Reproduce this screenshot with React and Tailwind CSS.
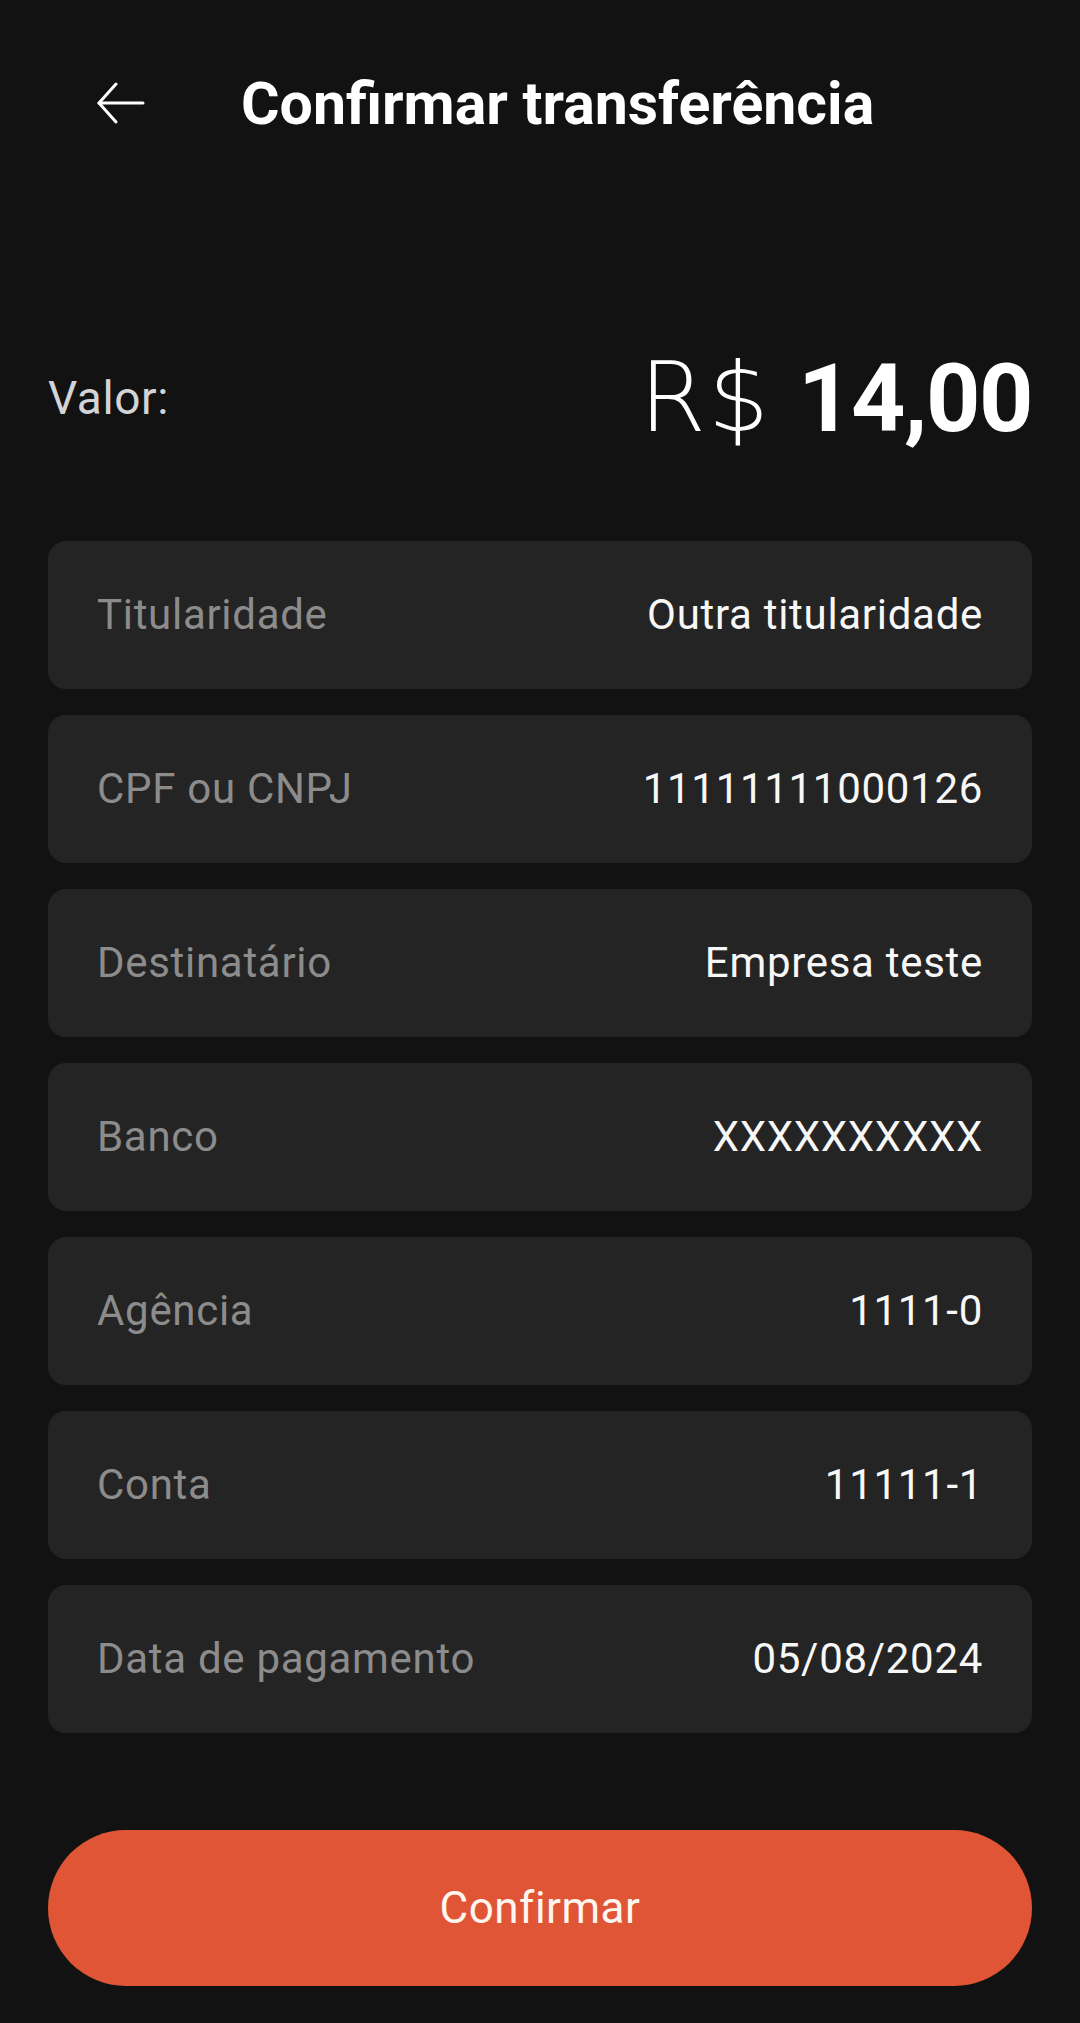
import React from 'react';

const rows = [
  { label: 'Titularidade', value: 'Outra titularidade' },
  { label: 'CPF ou CNPJ', value: '11111111000126' },
  { label: 'Destinatário', value: 'Empresa teste' },
  { label: 'Banco', value: 'XXXXXXXXXX' },
  { label: 'Agência', value: '1111-0' },
  { label: 'Conta', value: '11111-1' },
  { label: 'Data de pagamento', value: '05/08/2024' },
];

const BackArrow = () => (
  <svg width="48" height="42" viewBox="0 0 48 42" fill="none" stroke="currentColor" strokeWidth="3" strokeLinecap="round" strokeLinejoin="round">
    <path d="M46 21H2" />
    <path d="M19 2L2 21L19 40" />
  </svg>
);

const App = () => {
  return (
    <div className="min-h-[2023px] w-full bg-[#121212] text-white font-['Roboto',sans-serif]">
      <div className="h-[206px] flex items-center pl-[97px]">
        <button className="text-white">
          <BackArrow />
        </button>
        <h1 className="ml-[96px] text-[59px] font-bold leading-none">
          Confirmar transferência
        </h1>
      </div>

      <div className="mt-[143px] mx-[48px] h-[98px] flex items-center justify-between">
        <span className="text-[46px] text-[#d4d4d6] leading-none tracking-[0.6px]">Valor:</span>
        <div className="flex items-baseline leading-none">
          <span className="text-[96px] font-extralight font-['DejaVu_Sans',sans-serif] tracking-[2px] mr-[27px]">R$</span>
          <span className="text-[95px] font-bold tracking-[-1.5px]">14,00</span>
        </div>
      </div>

      <div className="mt-[94px] mx-[48px] flex flex-col gap-[26px]">
        {rows.map((row) => (
          <div
            key={row.label}
            className="h-[148px] rounded-[18px] bg-[#242424] px-[49px] flex items-center justify-between text-[42px] leading-none tracking-[0.7px]"
          >
            <span className="text-[#8c8c8c]">{row.label}</span>
            <span className="text-[#f7f7f7]">{row.value}</span>
          </div>
        ))}
      </div>

      <div className="mt-[97px] mx-[48px]">
        <button className="w-full h-[156px] rounded-full bg-[#e05535] text-[44px] tracking-[0.5px] text-[#fff6f0]">
          Confirmar
        </button>
      </div>
    </div>
  );
};

export default App;
